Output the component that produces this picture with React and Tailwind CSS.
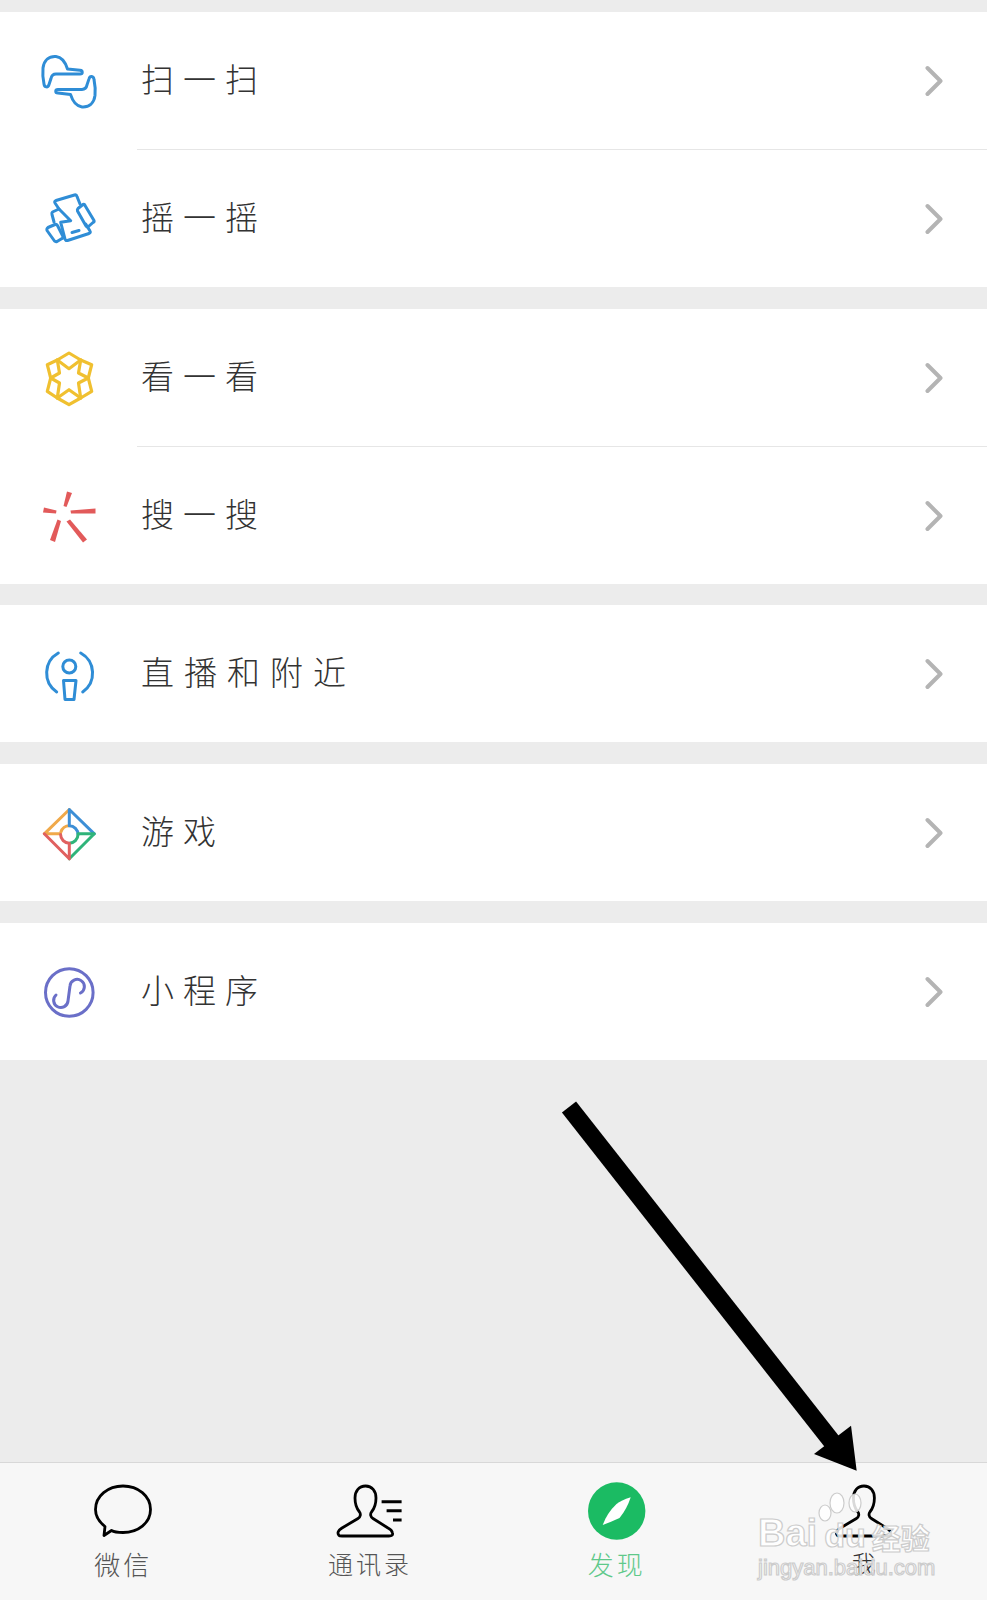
import React from "react";

const cjk = "font-['Noto_Sans_CJK_SC','Liberation_Sans',sans-serif]";

function ScanIcon() {
  const half = "M28.5 18 L41 19.3 C44 19.6 44 23 41 23 H17 C14 23 12.5 25 12 27.5 L10 33.5 C9 37 5.5 36.5 5 33 C4 28 3.5 22 4 17 C5 9 10 5 17 5.5 C22 6 26 10 28.5 18 Z";
  return (
    <svg width="60" height="60" viewBox="0 0 60 60" fill="none" stroke="#2f8dd6" strokeWidth="3" strokeLinecap="round" strokeLinejoin="round">
      <path d={half} />
      <path d={half} transform="rotate(180 30 30.7)" />
    </svg>
  );
}

function ShakeIcon() {
  return (
    <svg width="60" height="60" viewBox="0 0 60 60" fill="none" stroke="#2f8dd6" strokeWidth="3" strokeLinecap="round" strokeLinejoin="round">
      <path d="M41 15 L38 7.5 Q37.5 5.5 35.5 6 L17 11.5 Q15 12.5 16 14 L20 20 L13.5 23 Q12.5 24 13 25.5 L15 33" />
      <path d="M20 20 L31.7 31.7 L21.7 33.3 L26 50 Q26.5 52 28.5 51.5 L50 44.5 Q52 43.5 51 42 L46.7 35" />
      <path d="M9 38.5 L16 35.5 Q17.5 35 18.5 36.5 L24 47.5 Q24.5 49 23 49.5 L18 52.5 Q16.5 53 15.5 52 L8 41.5 Q7.5 39.5 9 38.5 Z" />
      <path d="M39 19.5 L44 15.5 Q45.5 15 46 16.5 L55 31.5 Q55.5 33 54 33.5 L49.5 37.5 Q48 38.5 47 37 L38.5 22 Q38 20.5 39 19.5 Z" />
      <path d="M33 43.5 L40 41.5" />
    </svg>
  );
}

function StarIcon() {
  return (
    <svg width="60" height="60" viewBox="0 0 60 60" fill="none" stroke="#f0c030" strokeWidth="3.2" strokeLinejoin="round" strokeLinecap="round">
      <path d="M30 5 L41.7 12 L52.7 16.7 L49.3 30 L52.7 43.3 L41.7 50 L30 56.7 L18.3 50 L8.3 43.3 L11.7 30 L8.3 16.7 L18.3 12 Z" />
      <path d="M41.7 12 L30 20.7 L18.3 12" />
      <path d="M41.7 12 L39.5 25 L49.3 30 L39.5 35 L41.7 50" />
      <path d="M41.7 50 L30 41.7 L18.3 50" />
      <path d="M18.3 50 L20.5 35 L11.7 30 L20.5 25 L18.3 12" />
    </svg>
  );
}

function SearchIcon() {
  return (
    <svg width="60" height="60" viewBox="0 0 60 60" fill="#e25a5a">
      <polygon points="28,5.5 33,7 27.5,21 24.5,20" />
      <polygon points="5,21.5 17.5,24.5 17,27.5 4,26.5" />
      <polygon points="31.5,24.5 56.5,22.5 56.5,27.5 32,27.5" />
      <polygon points="18.5,33.5 22,35 16,56 11,54" />
      <polygon points="27.5,35.5 31,33.5 48,53.5 44,56.5" />
    </svg>
  );
}

function LiveIcon() {
  return (
    <svg width="60" height="60" viewBox="0 0 60 60" fill="none" stroke="#2f8dd6" strokeWidth="3" strokeLinecap="round" strokeLinejoin="round">
      <circle cx="30.3" cy="22.5" r="6.5" />
      <path d="M24.5 36.5 H37 L35 55.5 H26 Z" />
      <path d="M19.3 9 A23 23 0 0 0 17.7 48" />
      <path d="M41.7 9 A23 23 0 0 1 43.7 48" />
    </svg>
  );
}

function GameIcon() {
  return (
    <svg width="60" height="60" viewBox="0 0 60 60" fill="none" strokeWidth="3" strokeLinecap="round" strokeLinejoin="round">
      <path d="M30.3 6.5 L5.3 30.8 H21.6 M21.9 29 A8.7 8.7 0 0 1 30.3 22.8" stroke="#f0a94a" />
      <path d="M30.3 22.8 V6.5 L55.3 30.8 M30.3 22.8 A8.7 8.7 0 0 1 39 31.5" stroke="#3d8fd6" />
      <path d="M55.3 30.8 H39 M55.3 30.8 L30.3 55.8 M39 31.5 A8.7 8.7 0 0 1 30.3 40.2" stroke="#2fb47a" />
      <path d="M30.3 55.8 L5.3 30.8 M30.3 55.8 V40.2 M30.3 40.2 A8.7 8.7 0 0 1 21.6 31.5" stroke="#e0605f" />
    </svg>
  );
}

function MiniIcon() {
  return (
    <svg width="60" height="60" viewBox="0 0 60 60" fill="none" stroke="#6a6fc8" strokeWidth="3" strokeLinecap="round">
      <circle cx="30.3" cy="30.5" r="23.8" />
      <path d="M17 33 A7.2 7.2 0 1 0 29 39 L31 24 A7.2 7.2 0 1 1 41.5 31" />
    </svg>
  );
}

function Chevron() {
  return (
    <svg width="18" height="32" viewBox="0 0 18 32" fill="none" stroke="#b4b4b4" strokeWidth="4" strokeLinecap="round" strokeLinejoin="round">
      <path d="M2.5 3 L15.5 16 L2.5 29" />
    </svg>
  );
}

function Row({ icon, label, divider, spacing = "tracking-[9px]" }) {
  return (
    <div className="relative h-[137px] flex items-center pl-[39px] pr-[44px]">
      {icon}
      <span className={`ml-[42px] mb-[4px] text-[33px] font-light text-[#333] leading-none ${spacing} ${cjk}`}>
        {label}
      </span>
      <span className="ml-auto flex">
        <Chevron />
      </span>
      {divider && <div className="absolute left-[137px] right-0 bottom-[-1px] h-px bg-[#e6e6e6]" />}
    </div>
  );
}

const personPath =
  "M35.6 6 C29 6 25 11 25 18 C25 24 27 29 29.5 32 C31 34 30.5 37 28 38.5 L12 48 C8 50.5 7 53 9 55.5 C9.5 56 10.5 56 12 56 H59 C62 56 63 55 62.5 53 C62 50.5 60 49 58 48 L43 38.5 C40.5 37 40 34 41.5 32 C44 29 46 24 46 18 C46 11 42 6 35.6 6 Z";

function Tab({ icon, label, color, size = "text-[26px] tracking-[3px]" }) {
  return (
    <div className="flex flex-col items-center pt-[17px]">
      {icon}
      <span className={`mt-[11px] font-light leading-none ${size} ${color} ${cjk}`}>{label}</span>
    </div>
  );
}

export default function App() {
  return (
    <div className="relative w-full h-[1600px] overflow-hidden bg-[#ececec] flex flex-col pt-[12px]">
      <div className="bg-white">
        <Row icon={<ScanIcon />} label="扫一扫" divider />
        <div className="h-px" />
        <Row icon={<ShakeIcon />} label="摇一摇" />
      </div>
      <div className="bg-white mt-[22px]">
        <Row icon={<StarIcon />} label="看一看" divider />
        <div className="h-px" />
        <Row icon={<SearchIcon />} label="搜一搜" />
      </div>
      <div className="bg-white mt-[21px]">
        <Row icon={<LiveIcon />} label="直播和附近" spacing="tracking-[10px]" />
      </div>
      <div className="bg-white mt-[22px]">
        <Row icon={<GameIcon />} label="游戏" />
      </div>
      <div className="bg-white mt-[22px]">
        <Row icon={<MiniIcon />} label="小程序" />
      </div>

      {/* Bottom tabs */}
      <div className="mt-auto h-[138px] bg-[#f7f7f7] border-t border-[#d8d8d8] grid grid-cols-4">
        <Tab
          color="text-[#555]"
          label="微信"
          icon={
            <svg width="80" height="60" viewBox="0 0 80 60" fill="none" stroke="#000" strokeWidth="2.8" strokeLinejoin="round">
              <path d="M21 55.5 L22 46.5 C15 41 12.5 36 12.5 29.5 C12.5 16 25 6 40 6 C55 6 67.5 16 67.5 29.5 C67.5 43 55 52.5 40 52.5 C36 52.5 31 52 28.5 50.5 Z" />
            </svg>
          }
        />
        <Tab
          color="text-[#555]"
          label="通讯录"
          size="text-[25px] tracking-[3px]"
          icon={
            <svg width="80" height="60" viewBox="0 0 80 60" fill="none" stroke="#000" strokeWidth="2.8" strokeLinejoin="round">
              <path d={personPath} />
              <path d="M51.6 21.7 H71.6 M56.6 30.7 H71.6 M63 40 H71.6" strokeWidth="3" />
            </svg>
          }
        />
        <Tab
          color="text-[#5fc98a]"
          label="发现"
          icon={
            <svg width="80" height="60" viewBox="0 0 80 60">
              <circle cx="39.7" cy="31" r="28.7" fill="#1bbb63" />
              <path d="M53.7 17.3 Q44 20.5 39.5 24 Q30 33 25.7 45 Q35 41.5 42.5 38 Q50 29 53.7 17.3 Z" fill="#fff" />
            </svg>
          }
        />
        <Tab
          color="text-[#333]"
          label="我"
          size="text-[24px]"
          icon={
            <svg width="80" height="60" viewBox="0 0 80 60" fill="none" stroke="#000" strokeWidth="2.8" strokeLinejoin="round">
              <path d={personPath} transform="translate(4.4 0)" />
            </svg>
          }
        />
      </div>

      {/* Hand-drawn arrow over the screenshot */}
      <svg className="absolute left-[555px] top-[1090px]" width="310" height="390" viewBox="0 0 310 390">
        <path d="M14 17 L278 353" stroke="#000" strokeWidth="18" />
        <polygon points="301.7,380.7 296,335.7 259,364" fill="#000" />
      </svg>

      {/* Baidu watermark */}
      <div className="absolute left-[758px] top-[1494px] w-[180px] flex flex-col text-white/85 font-['Liberation_Sans',sans-serif] [-webkit-text-stroke:1.2px_#cccccc]">
        <div className="relative h-[58px] flex items-end">
          <span className="text-[38px] font-bold leading-none">Bai</span>
          <span className="ml-[7px] text-[34px] font-bold leading-none">du</span>
          <span className={`ml-[6px] text-[29px] font-bold leading-none ${cjk}`}>经验</span>
          <svg className="absolute left-[60px] top-[-4px]" width="50" height="44" viewBox="0 0 50 44" fill="#fff" fillOpacity="0.85" stroke="#cccccc" strokeWidth="1.2">
            <ellipse cx="7" cy="23" rx="6" ry="8" />
            <ellipse cx="19" cy="13" rx="7" ry="10" />
            <ellipse cx="37" cy="13" rx="6" ry="9" />
          </svg>
        </div>
        <span className="mt-[5px] text-[22px] leading-none">jingyan.baidu.com</span>
      </div>
    </div>
  );
}
